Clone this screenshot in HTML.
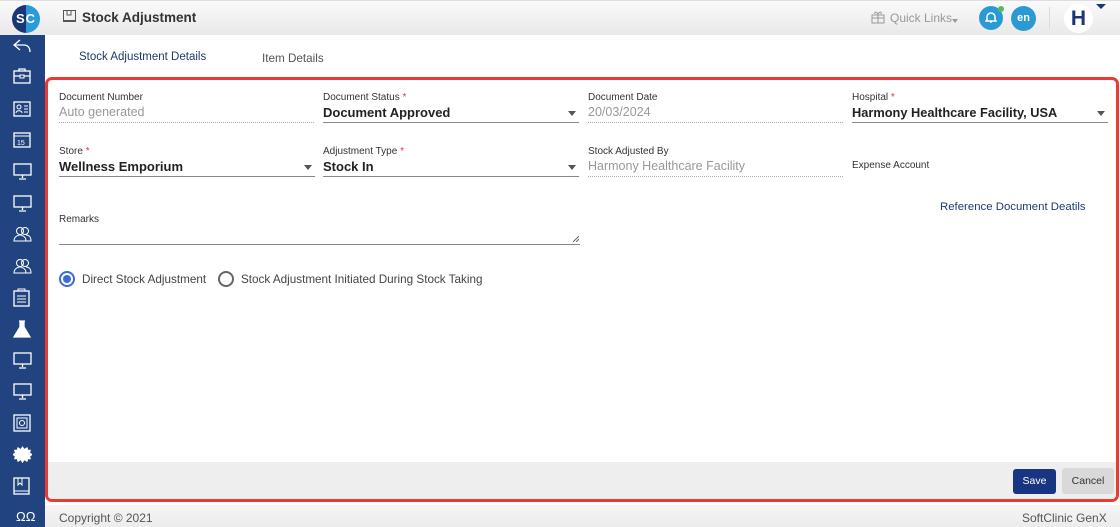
<!DOCTYPE html>
<html><head><style>
*{margin:0;padding:0;box-sizing:border-box}
body{width:1120px;height:527px;overflow:hidden;font-family:"Liberation Sans",sans-serif;background:#fff;position:relative;color:#222}
.hdr{position:absolute;left:0;top:0;width:1120px;height:35px;background:linear-gradient(#fafafa,#e9e9e9);border-top:1px solid #ddd}
.logo{position:absolute;left:12px;top:4px;width:28px;height:28px;border-radius:50%;background:linear-gradient(90deg,#1b3577 50%,#2a9ad8 50%);color:#fff;font-weight:bold;font-size:13px;text-align:center;line-height:28px;letter-spacing:1px}
.side{position:absolute;left:0;top:35px;width:45px;height:492px;background:#21437f}
.side svg{position:absolute;left:13px}
.t{position:absolute;white-space:nowrap}
.lbl{font-size:10px;color:#333}
.val{font-size:13px;font-weight:bold;color:#222}
.ph{font-size:12.5px;color:#999}
.line{position:absolute;height:1px;background:#888}
.dot{position:absolute;height:0;border-top:1px dotted #aaa}
.arr{position:absolute;width:0;height:0;border-left:4.5px solid transparent;border-right:4.5px solid transparent;border-top:5px solid #555}
.box{position:absolute;left:45px;top:77px;width:1074px;height:425px;border:3px solid #ea3b33;border-radius:7px;overflow:hidden}
.foot{position:absolute;left:0;bottom:0;width:100%;height:37px;background:#efeeef}
</style></head><body>
<div class="hdr">
<div class="logo">SC</div>
<svg style="position:absolute;left:63px;top:9px" width="13" height="12" viewBox="0 0 13 12"><rect x="0.5" y="0.5" width="12" height="10" fill="none" stroke="#555"/><path d="M4 1v4h4V1" fill="none" stroke="#555"/><path d="M0 11.5h13" stroke="#555"/></svg>
<div class="t" style="left:82px;top:9px;font-size:13.5px;font-weight:bold;color:#333">Stock Adjustment</div>
<svg style="position:absolute;left:871px;top:9px" width="14" height="14" viewBox="0 0 14 14"><rect x="1" y="5" width="12" height="8" fill="none" stroke="#999"/><path d="M1 8h12M7 4v9M7 4C5 1 3 2 4 4M7 4c2-3 4-2 3 0" fill="none" stroke="#999"/></svg>
<div class="t" style="left:890px;top:10px;font-size:12px;color:#999">Quick Links</div>
<div class="arr" style="left:952px;top:18px;border-top-color:#999;border-width:4px 3px 0"></div>
<div style="position:absolute;left:979px;top:5px;width:24px;height:24px;border-radius:50%;background:#2b9ad4"></div>
<svg style="position:absolute;left:985px;top:10px" width="12" height="13" viewBox="0 0 12 13"><path d="M2 9V6a4 4 0 0 1 8 0v3l1 1H1z" fill="none" stroke="#fff" stroke-width="1.5"/><path d="M5 11h2" stroke="#fff" stroke-width="1.5"/></svg>
<div style="position:absolute;left:998px;top:5px;width:6px;height:6px;border-radius:50%;background:#5cb85c"></div>
<div style="position:absolute;left:1011px;top:5px;width:25px;height:25px;border-radius:50%;background:#2b9ad4;color:#fff;font-size:11px;font-weight:bold;text-align:center;line-height:25px">en</div>
<div style="position:absolute;left:1049px;top:6px;width:1px;height:22px;background:#ddd"></div>
<div style="position:absolute;left:1064px;top:3px;width:29px;height:29px;border-radius:50%;background:#fff;color:#1b3577;font-size:21px;font-weight:bold;text-align:center;line-height:29px">H</div>
<div class="arr" style="left:1096px;top:3px;border-top-color:#1b3577;border-width:5px 5px 0"></div>
</div>
<div class="side">
<svg style="top:4px" width="18" height="14" viewBox="0 0 18 14"><path d="M7 1L1 6l6 5M1 6h10c4 0 6 3 6 7" fill="none" stroke="#fff" stroke-width="1.3"/></svg>
<svg style="top:33px" width="18" height="16" viewBox="0 0 18 16"><rect x="1" y="3" width="16" height="12" fill="none" stroke="#fff" stroke-width="1.3"/><path d="M6 3V1h6v2M1 8h16" fill="none" stroke="#fff" stroke-width="1.3"/><rect x="7" y="7" width="4" height="3" fill="#21437f" stroke="#fff"/></svg>
<svg style="top:65px" width="18" height="17" viewBox="0 0 18 17"><rect x="1" y="2" width="16" height="14" fill="none" stroke="#fff" stroke-width="1.3"/><circle cx="6" cy="7" r="2" fill="none" stroke="#fff"/><path d="M3 13c0-3 6-3 6 0M11 6h4M11 9h4M11 12h4" stroke="#fff" fill="none"/></svg>
<svg style="top:96px" width="18" height="17" viewBox="0 0 18 17"><rect x="1" y="2" width="16" height="14" fill="none" stroke="#fff" stroke-width="1.3"/><path d="M1 5h16" stroke="#fff"/><text x="4" y="14" font-size="7" fill="#fff" font-family="Liberation Sans">15</text></svg>
<svg style="top:128px" width="19" height="17" viewBox="0 0 19 17"><rect x="1" y="1" width="17" height="11" fill="none" stroke="#fff" stroke-width="1.3"/><path d="M9.5 12v3M6 16h7" stroke="#fff" stroke-width="1.3"/></svg>
<svg style="top:160px" width="19" height="17" viewBox="0 0 19 17"><rect x="1" y="1" width="17" height="11" fill="none" stroke="#fff" stroke-width="1.3"/><path d="M9.5 12v3M6 16h7" stroke="#fff" stroke-width="1.3"/></svg>
<svg style="top:191px" width="19" height="16" viewBox="0 0 19 16"><circle cx="7" cy="5" r="3.5" fill="none" stroke="#fff"/><circle cx="12" cy="5" r="3.5" fill="none" stroke="#fff"/><path d="M1 15c0-5 5-6 6-6s6 1 6 6zM13 9c3 0 5 2 5 6h-5" fill="none" stroke="#fff"/></svg>
<svg style="top:223px" width="19" height="16" viewBox="0 0 19 16"><circle cx="7" cy="5" r="3.5" fill="none" stroke="#fff"/><circle cx="12" cy="5" r="3.5" fill="none" stroke="#fff"/><path d="M1 15c0-5 5-6 6-6s6 1 6 6zM13 9c3 0 5 2 5 6h-5" fill="none" stroke="#fff"/></svg>
<svg style="top:253px" width="17" height="19" viewBox="0 0 17 19"><rect x="1" y="3" width="15" height="15" fill="none" stroke="#fff" stroke-width="1.3"/><path d="M5 3V1h7v2M4 8h9M4 11h9M4 14h9" stroke="#fff" fill="none"/></svg>
<svg style="top:285px" width="18" height="18" viewBox="0 0 18 18"><path d="M6 1h6M7 1v6L1 17h16L11 7V1" fill="#fff" stroke="#fff" stroke-width="1.3"/></svg>
<svg style="top:317px" width="19" height="17" viewBox="0 0 19 17"><rect x="1" y="1" width="17" height="11" fill="none" stroke="#fff" stroke-width="1.3"/><path d="M9.5 12v3M6 16h7" stroke="#fff" stroke-width="1.3"/></svg>
<svg style="top:348px" width="19" height="17" viewBox="0 0 19 17"><rect x="1" y="1" width="17" height="11" fill="none" stroke="#fff" stroke-width="1.3"/><path d="M9.5 12v3M6 16h7" stroke="#fff" stroke-width="1.3"/></svg>
<svg style="top:379px" width="18" height="18" viewBox="0 0 18 18"><rect x="1" y="1" width="16" height="16" fill="none" stroke="#fff" stroke-width="1.3"/><rect x="4" y="4" width="10" height="10" fill="none" stroke="#fff"/><circle cx="9" cy="9" r="2.5" fill="none" stroke="#fff"/></svg>
<svg style="top:411px" width="19" height="19" viewBox="0 0 20 20"><path d="M10 0l2 3 3-2 1 3 3 0-1 3 3 2-3 2 1 3-3 0-1 3-3-2-2 3-2-3-3 2-1-3-3 0 1-3-3-2 3-2-1-3 3 0 1-3 3 2z" fill="#fff"/></svg>
<svg style="top:442px" width="17" height="18" viewBox="0 0 17 18"><rect x="1" y="1" width="15" height="16" fill="none" stroke="#fff" stroke-width="1.3"/><path d="M5 1v7l2-2 2 2V1M1 14h15" stroke="#fff" fill="none"/></svg>
<div class="t" style="left:16px;top:474px;color:#fff;font-size:13px">ΩΩ</div>
</div>
<div class="t" style="left:79px;top:51px;font-size:11.5px;color:#1f3a6e">Stock Adjustment Details</div>
<div class="t" style="left:262px;top:52px;font-size:11.7px;color:#555">Item Details</div>

<div class="box">
<div class="t lbl" style="left:11px;top:12px">Document Number</div>
<div class="t ph" style="left:11px;top:25px">Auto generated</div>
<div class="dot" style="left:11px;top:42px;width:255px"></div>
<div class="t lbl" style="left:275px;top:12px">Document Status <span style="color:#d33">*</span></div>
<div class="t val" style="left:275px;top:25px">Document Approved</div>
<div class="arr" style="left:520px;top:31px"></div>
<div class="line" style="left:275px;top:42px;width:256px"></div>
<div class="t lbl" style="left:540px;top:12px">Document Date</div>
<div class="t ph" style="left:540px;top:25px">20/03/2024</div>
<div class="dot" style="left:540px;top:42px;width:255px"></div>
<div class="t lbl" style="left:804px;top:12px">Hospital <span style="color:#d33">*</span></div>
<div class="t" style="left:804px;top:25px;font-size:12.8px;font-weight:bold">Harmony Healthcare Facility, USA</div>
<div class="arr" style="left:1049px;top:31px"></div>
<div class="line" style="left:804px;top:42px;width:256px"></div>

<div class="t lbl" style="left:11px;top:66px">Store <span style="color:#d33">*</span></div>
<div class="t val" style="left:11px;top:79px">Wellness Emporium</div>
<div class="arr" style="left:256px;top:85px"></div>
<div class="line" style="left:11px;top:96px;width:256px"></div>
<div class="t lbl" style="left:275px;top:66px">Adjustment Type <span style="color:#d33">*</span></div>
<div class="t val" style="left:275px;top:79px">Stock In</div>
<div class="arr" style="left:520px;top:85px"></div>
<div class="line" style="left:275px;top:96px;width:256px"></div>
<div class="t lbl" style="left:540px;top:66px">Stock Adjusted By</div>
<div class="t ph" style="left:540px;top:79px">Harmony Healthcare Facility</div>
<div class="dot" style="left:540px;top:96px;width:255px"></div>
<div class="t lbl" style="left:804px;top:80px">Expense Account</div>
<div class="t" style="left:892px;top:121px;font-size:11.4px;color:#1f3a6e">Reference Document Deatils</div>

<div class="t lbl" style="left:11px;top:134px">Remarks</div>
<svg style="position:absolute;left:525px;top:156px" width="6" height="6"><path d="M0 6L6 0M3 6L6 3" stroke="#666"/></svg>
<div class="line" style="left:11px;top:164px;width:521px"></div>

<div style="position:absolute;left:11px;top:191px;width:16px;height:16px;border-radius:50%;border:2px solid #3a6bd8"></div>
<div style="position:absolute;left:15px;top:195px;width:8px;height:8px;border-radius:50%;background:#3a6bd8"></div>
<div class="t" style="left:34px;top:193px;font-size:11.7px;color:#444">Direct Stock Adjustment</div>
<div style="position:absolute;left:170px;top:191px;width:16px;height:16px;border-radius:50%;border:2px solid #666"></div>
<div class="t" style="left:193px;top:193px;font-size:11.7px;color:#444">Stock Adjustment Initiated During Stock Taking</div>

<div class="foot">
<div style="position:absolute;left:965px;top:7px;width:43px;height:25px;border-radius:3px;background:#173580;color:#fff;font-size:10.5px;text-align:center;line-height:25px">Save</div>
<div style="position:absolute;left:1014px;top:6px;width:52px;height:26px;border-radius:3px;background:#d9d9d9;color:#333;font-size:10.5px;text-align:center;line-height:26px">Cancel</div>
</div>
</div>

<div style="position:absolute;left:45px;top:505px;width:1075px;height:22px;background:linear-gradient(#f5f5f5,#ececec)"></div>
<div class="t" style="left:59px;top:511px;font-size:12px;color:#555">Copyright © 2021</div>
<div class="t" style="left:1022px;top:511px;font-size:12px;color:#555">SoftClinic GenX</div>
</body></html>
